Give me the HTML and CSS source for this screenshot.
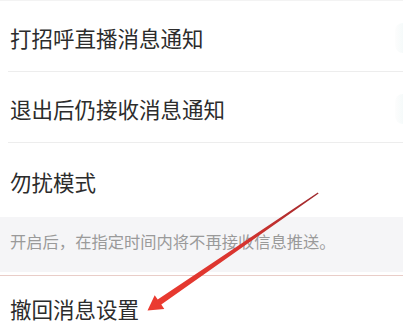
FILE: index.html
```html
<!DOCTYPE html>
<html lang="zh-CN">
<head>
<meta charset="utf-8">
<title>消息设置</title>
<link rel="stylesheet" href="styles.css">
</head>
<body>
<div class="page">
  <div class="top-line"></div>
  <div class="row"><span class="label">打招呼直播消息通知</span><span class="switch"></span></div>
  <div class="sep"></div>
  <div class="row"><span class="label">退出后仍接收消息通知</span><span class="switch"></span></div>
  <div class="sep"></div>
  <div class="row row-tall"><span class="label">勿扰模式</span></div>
  <div class="note">开启后，在指定时间内将不再接收信息推送。</div>
  <div class="gap"></div>
  <div class="sep-pink"></div>
  <div class="row row-last"><span class="label">撤回消息设置</span></div>
  <svg class="arrow" width="403" height="331" viewBox="0 0 403 331" aria-hidden="true">
    <defs>
      <linearGradient id="ag" x1="318" y1="193" x2="148" y2="310" gradientUnits="userSpaceOnUse">
        <stop offset="0" stop-color="#9e2a2e"/>
        <stop offset="0.45" stop-color="#d8342f"/>
        <stop offset="1" stop-color="#ec3b30"/>
      </linearGradient>
    </defs>
    <polygon fill="url(#ag)" points="318.6,193.6 161.3,304.6 164.3,309.0 147.5,310.5 154.7,295.2 157.7,299.6 317.8,192.4"/>
  </svg>
</div>
</body>
</html>
```
FILE: styles.css
```css
html, body {
  margin: 0;
  padding: 0;
  background: #ffffff;
}
.page {
  position: relative;
  width: 403px;
  height: 331px;
  overflow: hidden;
  font-family: "Noto Sans CJK SC", "Noto Sans", sans-serif;
}
.top-line {
  height: 1px;
  background: #f3f3f3;
}
.row {
  height: 70px;
  display: flex;
  align-items: center;
  justify-content: space-between;
  padding: 3px 0 0 10px;
  box-sizing: border-box;
  color: #2c2c2c;
  font-size: 21.5px;
  line-height: 30px;
}
.row-tall {
  height: 74px;
  padding-top: 4px;
}
.row-last {
  height: 54px;
  align-items: flex-start;
  padding-top: 18px;
}
.label {
  white-space: nowrap;
}
.switch {
  width: 8px;
  height: 30px;
  border-radius: 15px 0 0 15px;
  background: linear-gradient(90deg, #fdfdfd, #f5fafa);
}
.sep {
  height: 1px;
  margin-left: 8px;
  background: #ededed;
}
.note {
  height: 55px;
  box-sizing: border-box;
  padding: 13px 0 0 10px;
  background: #f5f5f7;
  color: #9a9a9a;
  font-size: 16.3px;
  line-height: 22px;
  white-space: nowrap;
}
.gap {
  height: 3px;
}
.sep-pink {
  height: 1px;
  background: #e9cdc8;
}
.arrow {
  position: absolute;
  left: 0;
  top: 0;
  pointer-events: none;
}
```
